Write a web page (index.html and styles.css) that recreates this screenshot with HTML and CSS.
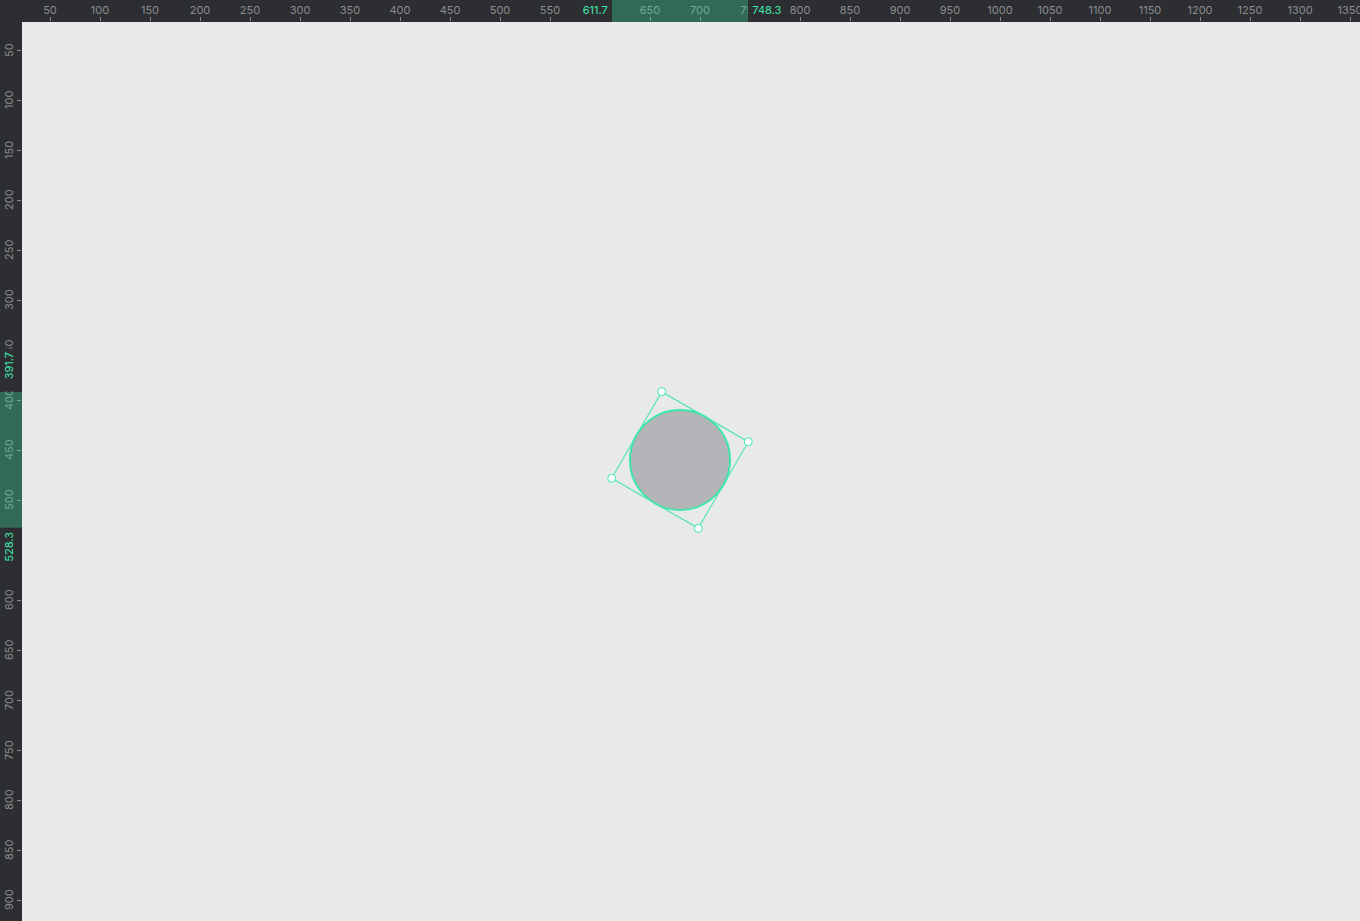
FILE: index.html
```html
<!DOCTYPE html>
<html>
<head>
<meta charset="utf-8">
<link rel="stylesheet" href="styles.css">
</head>
<body>
<div class="app">
  <div class="corner"></div>
  <div class="ruler-top">
    <div class="hcell"><span class="hlabel">50</span><i class="htick"></i></div>
    <div class="hcell"><span class="hlabel">100</span><i class="htick"></i></div>
    <div class="hcell"><span class="hlabel">150</span><i class="htick"></i></div>
    <div class="hcell"><span class="hlabel">200</span><i class="htick"></i></div>
    <div class="hcell"><span class="hlabel">250</span><i class="htick"></i></div>
    <div class="hcell"><span class="hlabel">300</span><i class="htick"></i></div>
    <div class="hcell"><span class="hlabel">350</span><i class="htick"></i></div>
    <div class="hcell"><span class="hlabel">400</span><i class="htick"></i></div>
    <div class="hcell"><span class="hlabel">450</span><i class="htick"></i></div>
    <div class="hcell"><span class="hlabel">500</span><i class="htick"></i></div>
    <div class="hcell"><span class="hlabel">550</span><i class="htick"></i></div>
    <div class="hcell"><span class="hlabel">600</span><i class="htick"></i></div>
    <div class="hcell"><span class="hlabel">650</span><i class="htick"></i></div>
    <div class="hcell"><span class="hlabel">700</span><i class="htick"></i></div>
    <div class="hcell"><span class="hlabel">750</span><i class="htick"></i></div>
    <div class="hcell"><span class="hlabel">800</span><i class="htick"></i></div>
    <div class="hcell"><span class="hlabel">850</span><i class="htick"></i></div>
    <div class="hcell"><span class="hlabel">900</span><i class="htick"></i></div>
    <div class="hcell"><span class="hlabel">950</span><i class="htick"></i></div>
    <div class="hcell"><span class="hlabel">1000</span><i class="htick"></i></div>
    <div class="hcell"><span class="hlabel">1050</span><i class="htick"></i></div>
    <div class="hcell"><span class="hlabel">1100</span><i class="htick"></i></div>
    <div class="hcell"><span class="hlabel">1150</span><i class="htick"></i></div>
    <div class="hcell"><span class="hlabel">1200</span><i class="htick"></i></div>
    <div class="hcell"><span class="hlabel">1250</span><i class="htick"></i></div>
    <div class="hcell"><span class="hlabel">1300</span><i class="htick"></i></div>
    <div class="hcell"><span class="hlabel">1350</span><i class="htick"></i></div>
    <div class="hband"></div>
    <span class="hsel hsel-start">611.7</span>
    <span class="hsel hsel-end">748.3</span>
  </div>
  <div class="ruler-left">
    <div class="vcell"><span class="vlabel">50</span><i class="vtick"></i></div>
    <div class="vcell"><span class="vlabel">100</span><i class="vtick"></i></div>
    <div class="vcell"><span class="vlabel">150</span><i class="vtick"></i></div>
    <div class="vcell"><span class="vlabel">200</span><i class="vtick"></i></div>
    <div class="vcell"><span class="vlabel">250</span><i class="vtick"></i></div>
    <div class="vcell"><span class="vlabel">300</span><i class="vtick"></i></div>
    <div class="vcell"><span class="vlabel">350</span><i class="vtick"></i></div>
    <div class="vcell"><span class="vlabel">400</span><i class="vtick"></i></div>
    <div class="vcell"><span class="vlabel">450</span><i class="vtick"></i></div>
    <div class="vcell"><span class="vlabel">500</span><i class="vtick"></i></div>
    <div class="vcell"><span class="vlabel">550</span><i class="vtick"></i></div>
    <div class="vcell"><span class="vlabel">600</span><i class="vtick"></i></div>
    <div class="vcell"><span class="vlabel">650</span><i class="vtick"></i></div>
    <div class="vcell"><span class="vlabel">700</span><i class="vtick"></i></div>
    <div class="vcell"><span class="vlabel">750</span><i class="vtick"></i></div>
    <div class="vcell"><span class="vlabel">800</span><i class="vtick"></i></div>
    <div class="vcell"><span class="vlabel">850</span><i class="vtick"></i></div>
    <div class="vcell"><span class="vlabel">900</span><i class="vtick"></i></div>
    <div class="vband"></div>
    <span class="vsel vsel-start">391.7</span>
    <span class="vsel vsel-end">528.3</span>
  </div>
  <div class="canvas">
    <svg class="stage" viewBox="22 22 1338 899" width="1338" height="899">
      <circle cx="680" cy="460" r="50" fill="#b4b5b9" stroke="#3ee6ab" stroke-width="2"/>
      <rect x="630" y="410" width="100" height="100" fill="none" stroke="#3ee6ab" stroke-width="1" transform="rotate(30 680 460)"/>
      <circle cx="661.7" cy="391.7" r="4" fill="#ffffff" stroke="#3ee6ab" stroke-width="1"/>
      <circle cx="748.3" cy="441.7" r="4" fill="#ffffff" stroke="#3ee6ab" stroke-width="1"/>
      <circle cx="698.3" cy="528.3" r="4" fill="#ffffff" stroke="#3ee6ab" stroke-width="1"/>
      <circle cx="611.7" cy="478.3" r="4" fill="#ffffff" stroke="#3ee6ab" stroke-width="1"/>
    </svg>
  </div>
</div>
</body>
</html>
```
FILE: styles.css
```css
html, body {
  margin: 0;
  padding: 0;
  height: 100%;
  overflow: hidden;
}
body {
  background: #e8e9eb;
  font-family: "Inter", "Liberation Sans", sans-serif;
}
.app {
  display: grid;
  grid-template-columns: 22px 1fr;
  grid-template-rows: 22px 1fr;
  width: 1360px;
  height: 921px;
}
.corner {
  background: #2d2e32;
}
.ruler-top {
  position: relative;
  background: #2d2e32;
  display: flex;
  padding-left: 3px;
  overflow: hidden;
}
.hcell {
  flex: none;
  width: 50px;
  height: 22px;
  display: flex;
  flex-direction: column;
}
.hlabel {
  display: block;
  text-align: center;
  font-size: 11px;
  line-height: 11px;
  padding-top: 5px;
  color: #8b8c90;
  height: 12px;
}
.htick {
  display: block;
  width: 1px;
  height: 4px;
  margin-left: 25px;
  background: #8b8c90;
}
.hband {
  position: absolute;
  top: 0;
  left: 589.7px;
  width: 136.6px;
  height: 22px;
  background: rgba(62, 230, 168, 0.33);
}
.hsel {
  position: absolute;
  top: 0;
  height: 22px;
  font-size: 11px;
  line-height: 11px;
  padding: 5px 4px 0;
  box-sizing: border-box;
  color: #3ee6ab;
  background: rgba(45, 46, 50, 0.93);
}
.hsel-start {
  right: calc(100% - 589.7px);
}
.hsel-end {
  left: 726.3px;
}
.ruler-left {
  position: relative;
  background: #2d2e32;
  display: flex;
  flex-direction: column;
  padding-top: 3px;
  overflow: hidden;
}
.vcell {
  flex: none;
  height: 50px;
  width: 22px;
  display: flex;
  flex-direction: row;
}
.vlabel {
  display: block;
  width: 13px;
  padding-right: 4px;
  height: 50px;
  text-align: center;
  writing-mode: vertical-rl;
  transform: rotate(180deg);
  font-size: 11px;
  line-height: 11px;
  color: #8b8c90;
}
.vtick {
  display: block;
  width: 4px;
  height: 1px;
  margin-top: 25px;
  background: #8b8c90;
}
.vband {
  position: absolute;
  left: 0;
  top: 369.7px;
  width: 22px;
  height: 136.6px;
  background: rgba(62, 230, 168, 0.33);
}
.vsel {
  position: absolute;
  left: 0;
  width: 18px;
  padding: 4px 4px 4px 0;
  writing-mode: vertical-rl;
  transform: rotate(180deg);
  font-size: 11px;
  line-height: 11px;
  color: #3ee6ab;
  background: rgba(45, 46, 50, 0.93);
  text-align: left;
}
.vsel-start {
  padding-top: 12px;
  bottom: calc(100% - 369.7px);
}
.vsel-end {
  top: 506.3px;
}
.canvas {
  position: relative;
  overflow: hidden;
}
.stage {
  display: block;
}
```
